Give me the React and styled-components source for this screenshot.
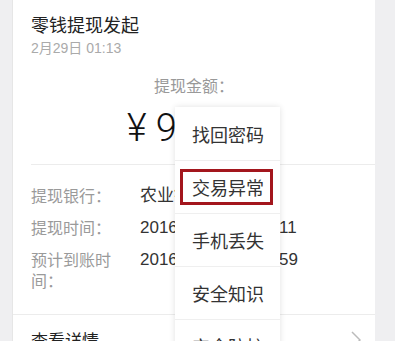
import styled, { createGlobalStyle } from "styled-components";

const Global = createGlobalStyle`
  html, body {
    margin: 0;
    padding: 0;
    background: #efeff1;
    overflow: hidden;
  }
  body {
    font-family: "Noto Sans CJK SC", "Noto Sans", sans-serif;
  }
`;

const Page = styled.div`
  position: relative;
  width: 395px;
  height: 341px;
  overflow: hidden;
  background: #efeff1;
  padding-left: 12px;
  box-sizing: border-box;
`;

const Card = styled.div`
  width: 363px;
  background: #fff;
  border-left: 1px solid #e6e6e6;
  box-sizing: border-box;
`;

const Header = styled.div`
  padding: 12px 0 0 18px;
`;

const Title = styled.div`
  font-size: 18px;
  line-height: 24px;
  color: #222;
`;

const Date = styled.div`
  margin-top: 4px;
  font-size: 14px;
  line-height: 16px;
  color: #aaa;
  font-family: "Liberation Sans", "Noto Sans CJK SC", sans-serif;
`;

const Amount = styled.div`
  display: flex;
  flex-direction: column;
  align-items: center;
  padding: 18px 0 14px;
`;

const AmountLabel = styled.div`
  font-size: 16px;
  line-height: 22px;
  color: #999;
`;

const AmountValue = styled.div`
  margin-top: 10px;
  font-family: "Roboto", "Liberation Sans", sans-serif;
  font-weight: 300;
  font-size: 38px;
  line-height: 44px;
  color: #111;
  align-self: flex-start;
  padding-left: 114px;
`;

const Divider = styled.div`
  height: 1px;
  margin-left: ${(p) => p.$inset || 0}px;
  background: #ececec;
`;

const Rows = styled.div`
  display: flex;
  flex-direction: column;
  gap: 11px;
  padding: 20px 0 23px 18px;
`;

const Row = styled.div`
  display: flex;
  font-size: 16px;
  line-height: 21px;
`;

const Label = styled.div`
  width: 82px;
  flex: none;
  color: #9a9a9a;
`;

const Value = styled.div`
  margin-left: 27px;
  color: #333;
  font-size: 17px;
  font-family: "Liberation Sans", "Noto Sans CJK SC", sans-serif;
`;

const Detail = styled.div`
  display: flex;
  align-items: center;
  justify-content: space-between;
  padding: 13px 14px 0 18px;
  font-size: 17px;
  line-height: 24px;
  color: #222;
`;

const Menu = styled.div`
  position: absolute;
  left: 175px;
  top: 107px;
  width: 105px;
  background: #fff;
  box-shadow: 0 0 6px rgba(0, 0, 0, 0.12);
`;

const Item = styled.div`
  position: relative;
  height: 53px;
  display: flex;
  align-items: center;
  padding-left: 17px;
  font-size: 18px;
  color: #333;
  border-top: ${(p) => (p.$first ? "none" : "1px solid #efefef")};
  box-sizing: border-box;
`;

const Highlight = styled.div`
  position: absolute;
  left: 5px;
  right: 7px;
  top: 8px;
  bottom: 8px;
  border: 3px solid #a3161d;
`;

const items = ["找回密码", "交易异常", "手机丢失", "安全知识", "安全防护"];

export default function App() {
  return (
    <Page>
      <Global />
      <Card>
        <Header>
          <Title>零钱提现发起</Title>
          <Date>2月29日 01:13</Date>
        </Header>
        <Amount>
          <AmountLabel>提现金额：</AmountLabel>
          <AmountValue>¥ 9</AmountValue>
        </Amount>
        <Divider $inset={18} />
        <Rows>
          <Row>
            <Label>提现银行：</Label>
            <Value>农业银行</Value>
          </Row>
          <Row>
            <Label>提现时间：</Label>
            <Value>2016-02-29 01:13:11</Value>
          </Row>
          <Row>
            <Label>预计到账时间：</Label>
            <Value>2016-03-01 23:59:59</Value>
          </Row>
        </Rows>
        <Divider />
        <Detail>
          <span>查看详情</span>
          <svg width="10" height="18" viewBox="0 0 10 18">
            <path d="M1 1l8 8-8 8" fill="none" stroke="#bbb" strokeWidth="1.5" />
          </svg>
        </Detail>
      </Card>
      <Menu>
        {items.map((t, i) => (
          <Item key={t} $first={i === 0}>
            {i === 1 && <Highlight />}
            {t}
          </Item>
        ))}
      </Menu>
    </Page>
  );
}
